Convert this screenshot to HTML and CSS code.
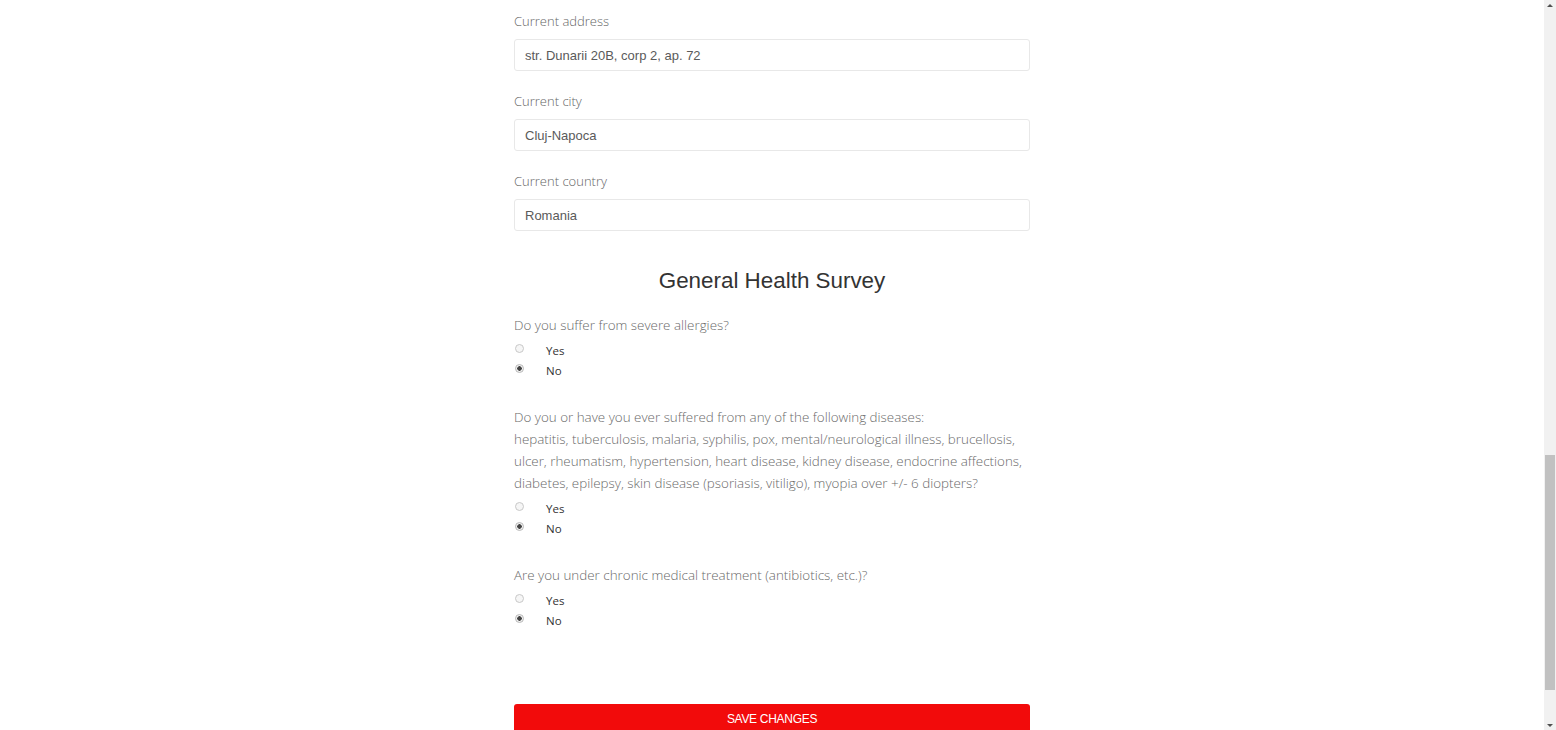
FILE: index.html
```html
<!DOCTYPE html>
<html lang="en">
<head>
<meta charset="utf-8">
<title>Profile</title>
<link rel="stylesheet" href="styles.css">
</head>
<body>
<div class="page">
  <main class="main">
    <form class="form">
      <div class="group">
        <label class="label">Current address</label>
        <input class="input" type="text" value="str. Dunarii 20B, corp 2, ap. 72">
      </div>
      <div class="group">
        <label class="label">Current city</label>
        <input class="input" type="text" value="Cluj-Napoca">
      </div>
      <div class="group">
        <label class="label">Current country</label>
        <input class="input" type="text" value="Romania">
      </div>

      <h2 class="title">General Health Survey</h2>

      <div class="question">
        <p class="q-text">Do you suffer from severe allergies?</p>
        <label class="option"><input class="radio" type="radio" name="q1"><span>Yes</span></label>
        <label class="option"><input class="radio" type="radio" name="q1" checked><span>No</span></label>
      </div>

      <div class="question">
        <p class="q-text">Do you or have you ever suffered from any of the following diseases:<br>hepatitis, tuberculosis, malaria, syphilis, pox, mental/neurological illness, brucellosis,<br>ulcer, rheumatism, hypertension, heart disease, kidney disease, endocrine affections,<br>diabetes, epilepsy, skin disease (psoriasis, vitiligo), myopia over +/- 6 diopters?</p>
        <label class="option"><input class="radio" type="radio" name="q2"><span>Yes</span></label>
        <label class="option"><input class="radio" type="radio" name="q2" checked><span>No</span></label>
      </div>

      <div class="question">
        <p class="q-text">Are you under chronic medical treatment (antibiotics, etc.)?</p>
        <label class="option"><input class="radio" type="radio" name="q3"><span>Yes</span></label>
        <label class="option"><input class="radio" type="radio" name="q3" checked><span>No</span></label>
      </div>

      <button class="save" type="button">SAVE CHANGES</button>
    </form>
  </main>
  <div class="scrollbar">
    <div class="arrow arrow-up"></div>
    <div class="track">
      <div class="track-space"></div>
      <div class="thumb"></div>
    </div>
    <div class="arrow arrow-down"></div>
  </div>
</div>
</body>
</html>
```

FILE: styles.css
```css
* { box-sizing: border-box; }
html, body {
  margin: 0;
  padding: 0;
  height: 100%;
  overflow: hidden;
  background: #ffffff;
}
.page {
  display: flex;
  height: 730px;
}
.main {
  flex: 1;
  display: flex;
  justify-content: center;
}
.form {
  width: 516px;
  padding-top: 12px;
  display: flex;
  flex-direction: column;
}
.group {
  display: flex;
  flex-direction: column;
  margin-bottom: 21px;
}
.label {
  font-family: "Open Sans", sans-serif;
  font-weight: 300;
  font-size: 13px;
  line-height: 18px;
  color: #666;
  margin-bottom: 9px;
}
.input {
  height: 32px;
  border: 1px solid #e8e8e8;
  border-radius: 3px;
  padding: 0 10px;
  font-family: "Liberation Sans", Arial, sans-serif;
  font-size: 13px;
  color: #5a5a5a;
  background: #fff;
  outline: none;
}
.title {
  margin: 17px 0 21px;
  text-align: center;
  font-family: "Liberation Sans", Arial, sans-serif;
  font-weight: 400;
  font-size: 22.4px;
  line-height: 24px;
  color: #333;
}
.question {
  display: flex;
  flex-direction: column;
  margin-bottom: 26px;
}
.q-text {
  margin: 0 0 4px;
  font-family: "Open Sans", sans-serif;
  font-weight: 300;
  font-size: 13.4px;
  line-height: 22px;
  color: #6a6a6a;
  white-space: nowrap;
}
.option {
  display: flex;
  align-items: center;
  height: 20px;
  font-family: "Open Sans", sans-serif;
  font-size: 11.5px;
  color: #333;
}
.radio {
  appearance: none;
  -webkit-appearance: none;
  width: 9px;
  height: 9px;
  margin: 0 22px 4px 1px;
  border: 1px solid #c8c8c8;
  border-radius: 50%;
  background: #f6f6f6;
}
.radio:checked {
  border-color: #b8b8b8;
  background: radial-gradient(circle, #444 0 2px, #f2f2f2 2.5px);
}
.save {
  margin-top: 48px;
  height: 30px;
  flex-shrink: 0;
  border: none;
  border-radius: 3px;
  background: #f20b0b;
  color: #fff;
  font-family: "Liberation Sans", Arial, sans-serif;
  font-size: 12px;
  letter-spacing: -0.3px;
}
.scrollbar {
  width: 12px;
  display: flex;
  flex-direction: column;
  background: #f1f1f1;
}
.arrow {
  height: 10px;
  display: flex;
  justify-content: center;
  align-items: center;
}
.arrow-up::before {
  content: "";
  border-left: 3px solid transparent;
  border-right: 3px solid transparent;
  border-bottom: 3px solid #505050;
}
.arrow-down::before {
  content: "";
  border-left: 3px solid transparent;
  border-right: 3px solid transparent;
  border-top: 3px solid #505050;
}
.track {
  flex: 1;
  display: flex;
  flex-direction: column;
}
.track-space {
  height: 445px;
}
.thumb {
  height: 235px;
  margin: 0 1px;
  background: #c1c1c1;
}
```
